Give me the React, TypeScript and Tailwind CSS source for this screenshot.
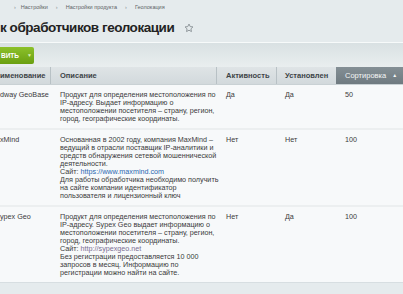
import React from "react";

const row1 = [
  "Продукт для определения местоположения по",
  "IP-адресу. Выдает информацию о",
  "местоположении посетителя – страну, регион,",
  "город, географические координаты.",
];

const row2: React.ReactNode[] = [
  "Основанная в 2002 году, компания MaxMind –",
  "ведущий в отрасли поставщик IP-аналитики и",
  "средств обнаружения сетевой мошеннической",
  "деятельности.",
  <>
    Сайт: <span className="text-[#2a67b1]">https://www.maxmind.com</span>
  </>,
  "Для работы обработчика необходимо получить",
  "на сайте компании идентификатор",
  "пользователя и лицензионный ключ",
];

const row3: React.ReactNode[] = [
  "Продукт для определения местоположения по",
  "IP-адресу. Sypex Geo выдает информацию о",
  "местоположении посетителя – страну, регион,",
  "город, географические координаты.",
  <>
    Сайт: <span className="text-[#7b6e93]">http://sypexgeo.net</span>
  </>,
  "Без регистрации предоставляется 10 000",
  "запросов в месяц. Информацию по",
  "регистрации можно найти на сайте.",
];

type Row = {
  name: string;
  desc: React.ReactNode[];
  active: string;
  installed: string;
  sort: string;
};

const rows: Row[] = [
  { name: "dway GeoBase", desc: row1, active: "Да", installed: "Да", sort: "50" },
  { name: "xMind", desc: row2, active: "Нет", installed: "Нет", sort: "100" },
  { name: "ypex Geo", desc: row3, active: "Нет", installed: "Да", sort: "100" },
];

function Star() {
  return (
    <svg width="10" height="10" viewBox="0 0 24 24" fill="none" stroke="#8a9296" strokeWidth="2.2" strokeLinejoin="round">
      <path d="M12 2.5l2.9 6.1 6.6.8-4.9 4.6 1.3 6.6L12 17.3l-5.9 3.3 1.3-6.6-4.9-4.6 6.6-.8z" />
    </svg>
  );
}

export default function App() {
  return (
    <div
      className="w-[403px] h-[294px] overflow-hidden bg-[#e5ebed] text-[#3a3a3a]"
      style={{ fontFamily: "'Liberation Sans', Arial, sans-serif" }}
    >
      {/* breadcrumbs */}
      <div className="h-[14px] flex items-center text-[5.5px] text-[#5c6266] pl-[14px] pt-[1px]">
        <span className="text-[#8a9094]">›</span>
        <span className="ml-[5px]">Настройки</span>
        <span className="ml-[8px] text-[#8a9094]">›</span>
        <span className="ml-[8px]">Настройки продукта</span>
        <span className="ml-[8px] text-[#8a9094]">›</span>
        <span className="ml-[8px]">Геолокация</span>
      </div>
      {/* title */}
      <div className="h-[28px] flex items-center">
        <span className="text-[13.5px] font-bold text-[#222] tracking-[-0.45px] leading-none">
          к обработчиков геолокации
        </span>
        <span className="ml-[10px] flex items-center">
          <Star />
        </span>
      </div>
      {/* toolbar */}
      <div className="h-[1px] bg-[#f7fafa]" />
      <div className="h-[24px] bg-gradient-to-b from-[#d9e1e3] to-[#e9eeef] flex items-center pt-[1px]">
        <div className="h-[17px] w-[34px] rounded-r-[2px] bg-gradient-to-b from-[#8cc12a] to-[#6a9f10] flex items-center text-white text-[6.5px] font-bold">
          <span className="ml-[1px]">ВИТЬ</span>
          <span className="ml-[8px] text-[5px] text-[#dff0b8]">▼</span>
        </div>
      </div>
      {/* table header */}
      <div className="h-[18px] flex text-[7.5px] font-bold text-[#3d4447] bg-gradient-to-b from-[#dfe4e6] to-[#d2d9dc] border-b border-[#c9d1d4]">
        <div className="w-[51px] flex items-center border-r border-[#b8c1c5]">именование</div>
        <div className="w-[166px] flex items-center pl-[9px] border-r border-[#b8c1c5]">Описание</div>
        <div className="w-[60px] flex items-center pl-[9px] border-r border-[#b8c1c5]">Активность</div>
        <div className="w-[59px] flex items-center pl-[8px]">Установлен</div>
        <div className="flex-1 flex items-center pl-[9px] bg-gradient-to-b from-[#848f95] to-[#6f7a80] text-[#f4f6f7]">
          <span className="font-normal">Сортировка</span>
          <span className="ml-[6px] text-[5px]">▲</span>
        </div>
      </div>
      {/* rows */}
      <div className="flex flex-col gap-[2px] bg-[#eceff0]">
        {rows.map((r, i) => (
          <div key={i} className="flex bg-[#f7f9fa] text-[7.2px] leading-[8px] pt-[6px] pb-[5px]">
            <div className="w-[51px] whitespace-nowrap overflow-hidden">{r.name}</div>
            <div className="w-[166px] pl-[9px] whitespace-nowrap">
              {r.desc.map((l, j) => (
                <div key={j}>{l}</div>
              ))}
            </div>
            <div className="w-[60px] pl-[9px]">{r.active}</div>
            <div className="w-[59px] pl-[8px]">{r.installed}</div>
            <div className="flex-1 pl-[9px]">{r.sort}</div>
          </div>
        ))}
      </div>
      <div className="h-[1px] bg-[#d7dee1]" />
    </div>
  );
}
